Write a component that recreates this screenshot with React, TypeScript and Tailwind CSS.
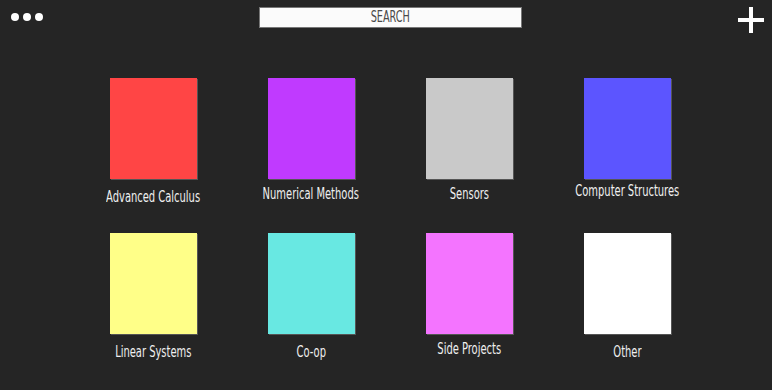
const subjects = [
  { name: "Advanced Calculus", color: "bg-[#ff4545]", label: "mt-[10px]" },
  { name: "Numerical Methods", color: "bg-[#c03aff]", label: "mt-[7px]" },
  { name: "Sensors", color: "bg-[#c9c9c9]", label: "mt-[7px]" },
  { name: "Computer Structures", color: "bg-[#5c55ff]", label: "mt-[4px]" },
  { name: "Linear Systems", color: "bg-[#ffff88]", label: "mt-[10px]" },
  { name: "Co-op", color: "bg-[#68e8e2]", label: "mt-[10px]" },
  { name: "Side Projects", color: "bg-[#f474ff]", label: "mt-[7px]" },
  { name: "Other", color: "bg-white", label: "mt-[10px]" },
];

function Plus() {
  return (
    <svg width="26" height="26" viewBox="0 0 26 26">
      <rect x="11" y="0" width="4" height="26" fill="white" />
      <rect x="0" y="11" width="26" height="4" fill="white" />
    </svg>
  );
}

export default function App() {
  return (
    <main
      className="w-[772px] h-[390px] bg-[#252525] overflow-hidden"
      style={{ fontFamily: '"Liberation Sans Narrow", "DejaVu Sans Condensed", sans-serif' }}
    >
      <header className="relative h-[35px] flex items-start">
        <div className="flex gap-[4px] mt-[13px] ml-[11px]">
          <span className="w-[8px] h-[8px] rounded-full bg-white" />
          <span className="w-[8px] h-[8px] rounded-full bg-white" />
          <span className="w-[8px] h-[8px] rounded-full bg-white" />
        </div>
        <div className="ml-[216px] mt-[7px] w-[263px] h-[21px] bg-[#fbfbfb] border border-[#777] flex items-center justify-center">
          <span className="inline-block scale-x-[.72] text-[15px] leading-none text-[#4a4a4a]">SEARCH</span>
        </div>
        <div className="ml-auto mr-[8px] mt-[7px]">
          <Plus />
        </div>
      </header>

      <section className="ml-[74px] mt-[43px] w-[632px] grid grid-cols-4">
        {subjects.map((s) => (
          <div key={s.name} className="flex flex-col items-center h-[155px]">
            <div className={`w-[87px] h-[101px] ${s.color} shadow-[1px_1px_0_#555]`} />
            <span className={`${s.label} inline-block scale-x-[.69] text-[16px] leading-none text-[#f0f0f0] whitespace-nowrap`}>
              {s.name}
            </span>
          </div>
        ))}
      </section>
    </main>
  );
}
